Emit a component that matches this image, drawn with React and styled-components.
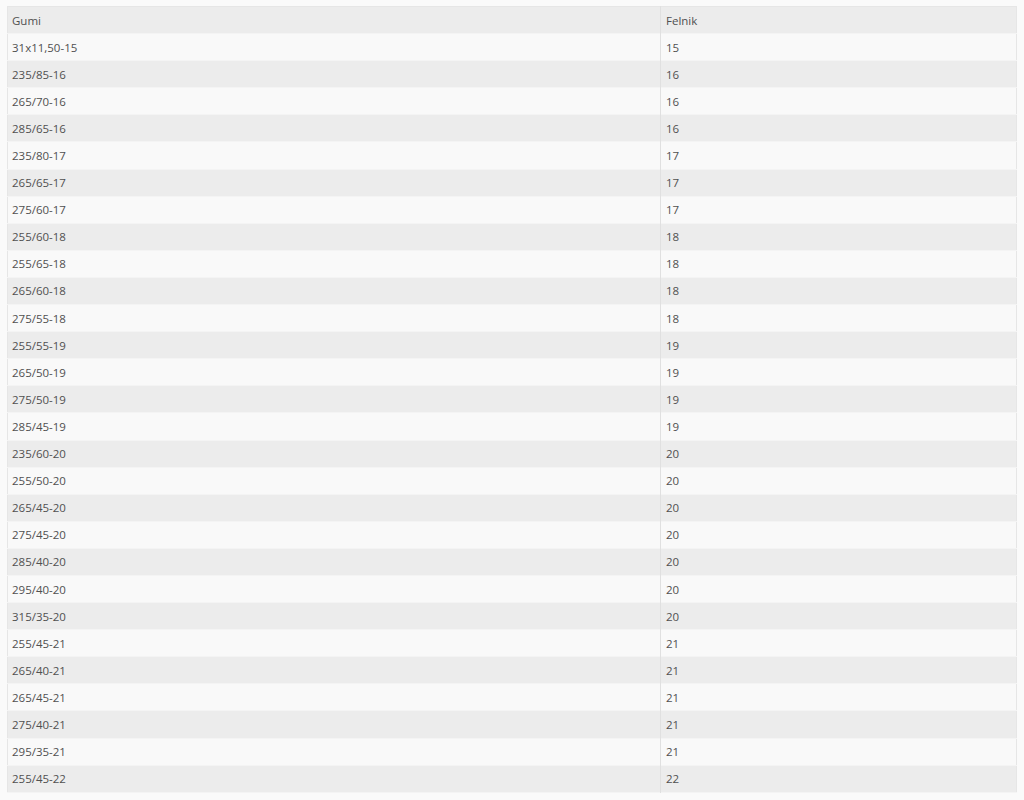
import styled, { createGlobalStyle } from 'styled-components';

const GlobalStyle = createGlobalStyle`
    html, body {
        margin: 0;
        padding: 0;
        background: #fafafa;
    }
    body {
        font-family: "Open Sans", "Noto Sans", sans-serif;
    }
`;

const Wrapper = styled.div`
    padding: 6px 7px;
`;

const Table = styled.table`
    width: 1010px;
    border-collapse: collapse;
    border: 1px solid #e6e6e6;
    font-size: 11.5px;
    color: #505050;
`;

const Row = styled.tr`
    background: ${(props) => (props.$odd ? '#f9f9f9' : '#ececec')};
    border-bottom: 1px solid #f4f4f4;
`;

const HeadCell = styled.th`
    text-align: left;
    font-weight: 400;
    height: 26.1px;
    padding: 0 5px 0 4px;
    border-right: 1px solid #e0e0e0;
    &:last-child { border-right: none; padding-left: 5px; }
    &:first-child { width: 643px; }
`;

const Cell = styled.td`
    height: 26.1px;
    padding: 0 5px 0 4px;
    border-right: 1px solid #e0e0e0;
    &:last-child { border-right: none; padding-left: 5px; }
`;

const rows = [
    ['31x11,50-15', '15'],
    ['235/85-16', '16'],
    ['265/70-16', '16'],
    ['285/65-16', '16'],
    ['235/80-17', '17'],
    ['265/65-17', '17'],
    ['275/60-17', '17'],
    ['255/60-18', '18'],
    ['255/65-18', '18'],
    ['265/60-18', '18'],
    ['275/55-18', '18'],
    ['255/55-19', '19'],
    ['265/50-19', '19'],
    ['275/50-19', '19'],
    ['285/45-19', '19'],
    ['235/60-20', '20'],
    ['255/50-20', '20'],
    ['265/45-20', '20'],
    ['275/45-20', '20'],
    ['285/40-20', '20'],
    ['295/40-20', '20'],
    ['315/35-20', '20'],
    ['255/45-21', '21'],
    ['265/40-21', '21'],
    ['265/45-21', '21'],
    ['275/40-21', '21'],
    ['295/35-21', '21'],
    ['255/45-22', '22'],
];

const App = () => {
    return (
        <>
            <GlobalStyle />
            <Wrapper>
                <Table>
                    <thead>
                        <Row>
                            <HeadCell>Gumi</HeadCell>
                            <HeadCell>Felnik</HeadCell>
                        </Row>
                    </thead>
                    <tbody>
                        {rows.map((r, i) => (
                            <Row key={r[0]} $odd={i % 2 === 0}>
                                <Cell>{r[0]}</Cell>
                                <Cell>{r[1]}</Cell>
                            </Row>
                        ))}
                    </tbody>
                </Table>
            </Wrapper>
        </>
    );
};

export default App;
